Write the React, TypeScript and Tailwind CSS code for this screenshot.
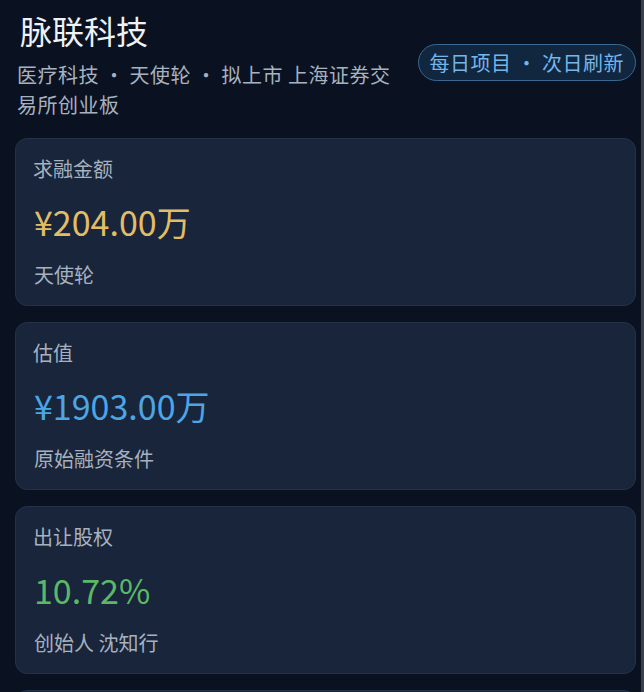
import React from "react";

const font = { fontFamily: '"Noto Sans CJK SC", "Noto Sans", sans-serif' };

function Card({ label, value, sub, color }: { label: string; value: string; sub: string; color: string }) {
  return (
    <div className="flex flex-col gap-[18px] rounded-[12px] border border-[#243249] bg-[#18253b] pl-[17px] pr-4 pt-4 pb-[16px]">
      <div className="h-[28px] text-[20px] leading-[28px] text-[#a7b1bf]">{label}</div>
      <div className={`h-[42px] pl-[1px] text-[34px] leading-[42px] ${color}`}>{value}</div>
      <div className="h-[28px] pl-[1px] text-[20px] leading-[28px] text-[#a7b1bf]">{sub}</div>
    </div>
  );
}

export default function App() {
  return (
    <div className="flex h-[692px] w-[644px] overflow-hidden bg-[#0a1120]" style={font}>
      <div className="flex-1 pl-[15px] pr-[5px]">
        <div className="flex items-start justify-between pt-[8px] pb-[18px]">
          <div className="w-[385px]">
            <div className="pl-[5px] text-[32px] leading-[44px] text-[#eef1f5]">脉联科技</div>
            <div className="mt-[8px] w-[380px] pl-[2px] text-[20px] leading-[30px] tracking-[0.5px] text-[#a7b1bf]">
              医疗科技 · 天使轮 · 拟上市 上海证券交易所创业板
            </div>
          </div>
          <div className="mt-[36px] rounded-full border border-[#3a6892] bg-[#11263f] px-[11px] py-[3px] text-[20px] leading-[29px] tracking-[0.5px] text-[#74b6ea]">
            每日项目 · 次日刷新
          </div>
        </div>
        <div className="flex flex-col gap-4">
          <Card label="求融金额" value="¥204.00万" sub="天使轮" color="text-[#e3bd66]" />
          <Card label="估值" value="¥1903.00万" sub="原始融资条件" color="text-[#4ca6e6]" />
          <Card label="出让股权" value="10.72%" sub="创始人 沈知行" color="text-[#5cb866]" />
          <Card label="" value="" sub="" color="text-[#a7b1bf]" />
        </div>
      </div>
      <div className="w-[3px] bg-[#3a404c]" />
    </div>
  );
}
